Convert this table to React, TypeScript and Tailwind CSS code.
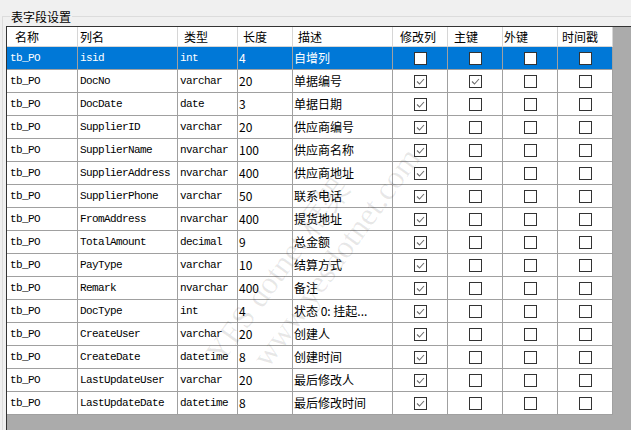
const rows: [string, string, string, string][] = [
  ["isid", "int", "4", "自增列"],
  ["DocNo", "varchar", "20", "单据编号"],
  ["DocDate", "date", "3", "单据日期"],
  ["SupplierID", "varchar", "20", "供应商编号"],
  ["SupplierName", "nvarchar", "100", "供应商名称"],
  ["SupplierAddress", "nvarchar", "400", "供应商地址"],
  ["SupplierPhone", "varchar", "50", "联系电话"],
  ["FromAddress", "nvarchar", "400", "提货地址"],
  ["TotalAmount", "decimal", "9", "总金额"],
  ["PayType", "varchar", "10", "结算方式"],
  ["Remark", "nvarchar", "400", "备注"],
  ["DocType", "int", "4", "状态 0: 挂起..."],
  ["CreateUser", "varchar", "20", "创建人"],
  ["CreateDate", "datetime", "8", "创建时间"],
  ["LastUpdateUser", "varchar", "20", "最后修改人"],
  ["LastUpdateDate", "datetime", "8", "最后修改时间"],
];

const headers = [
  { label: "名称", pad: "pl-[8px]" },
  { label: "列名", pad: "pl-[2px]" },
  { label: "类型", pad: "pl-[6px]" },
  { label: "长度", pad: "pl-[5px]" },
  { label: "描述", pad: "pl-[5px]" },
  { label: "修改列", pad: "pl-[7px]" },
  { label: "主键", pad: "pl-[6px]" },
  { label: "外键", pad: "pl-[1px]" },
  { label: "时间戳", pad: "pl-[4px]" },
];

const mono = "font-['Liberation_Mono',monospace] text-[11px] tracking-[-0.6px]";
const cjk = "font-['Noto_Sans_CJK_SC',sans-serif] text-[12px]";

const CheckBox = ({ checked }: { checked: boolean }) => (
  <span className="w-[13px] h-[13px] border border-[#333] bg-white flex items-center justify-center">
    {checked && (
      <svg width="11" height="11" viewBox="0 0 11 11">
        <path d="M2 5.5 L4.5 8 L9 3" fill="none" stroke="#6e6e6e" strokeWidth="1.1" />
      </svg>
    )}
  </span>
);

const App = () => {
  return (
    <div className={`w-[631px] h-[430px] bg-[#f0f0f0] overflow-hidden relative ${cjk}`}>
      <div className="pt-[16px] pl-[2px] h-full">
        <div className="border-t border-l border-[#dcdcdc] h-full">
          <div className="-mt-[10px] h-[19px] pl-[7px] flex">
            <span className="bg-[#f0f0f0] px-[1px] leading-[19px] text-black">表字段设置</span>
          </div>
          <div className="ml-[3px] h-[404px] bg-[#ababab] border-t border-l border-[#333]">
            <div className="grid grid-cols-[71px_100px_60px_55px_100px_55px_55px_55px_55px] w-fit">
              {headers.map((h) => (
                <div
                  key={h.label}
                  className={`h-[20px] bg-white border-r border-b border-[#d6d6d6] flex items-center text-black ${h.pad}`}
                >
                  {h.label}
                </div>
              ))}
              {rows.map((r, i) => {
                const sel = i === 0;
                const cell = `h-[23px] border-r border-b border-[#a0a0a0] flex items-center ${
                  sel ? "bg-[#0078d7] text-white" : "bg-white text-black"
                }`;
                return [
                  <div key={`a${i}`} className={`${cell} pl-[3px] ${mono}`}>tb_PO</div>,
                  <div key={`b${i}`} className={`${cell} pl-[2px] ${mono}`}>{r[0]}</div>,
                  <div key={`c${i}`} className={`${cell} pl-[2px] ${mono}`}>{r[1]}</div>,
                  <div key={`d${i}`} className={`${cell} pl-[1px]`}>{r[2]}</div>,
                  <div key={`e${i}`} className={`${cell} pl-[1px] whitespace-nowrap`}>{r[3]}</div>,
                  <div key={`f${i}`} className={`${cell} justify-center`}>
                    <CheckBox checked={!sel} />
                  </div>,
                  <div key={`g${i}`} className={`${cell} justify-center`}>
                    <CheckBox checked={i === 1} />
                  </div>,
                  <div key={`h${i}`} className={`${cell} justify-center`}>
                    <CheckBox checked={false} />
                  </div>,
                  <div key={`k${i}`} className={`${cell} justify-center`}>
                    <CheckBox checked={false} />
                  </div>,
                ];
              })}
            </div>
          </div>
        </div>
      </div>

      {/* watermark */}
      <div className="absolute left-[170px] top-[215px] -rotate-[54deg] pointer-events-none text-[32px] leading-[40px] text-black/[0.09] font-['Liberation_Serif',serif] whitespace-nowrap">
        <div>YES dotnet 框架</div>
        <div className="pl-[24px]">www.yesdotnet.com</div>
      </div>
    </div>
  );
};

export default App;
